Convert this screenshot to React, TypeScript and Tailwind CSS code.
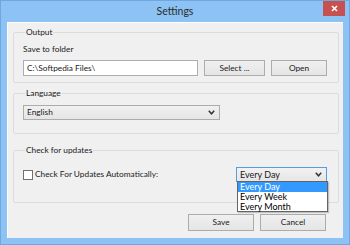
import React from 'react';

const font = { fontFamily: 'Lato, "Liberation Sans", sans-serif' };

function Chevron() {
  return (
    <svg width="7" height="5" viewBox="0 0 7 5" className="shrink-0">
      <polyline points="0.8,0.8 3.5,3.8 6.2,0.8" fill="none" stroke="#333" strokeWidth="1.5" />
    </svg>
  );
}

function Group({ label, className, children }: { label: string; className: string; children: React.ReactNode }) {
  return (
    <fieldset className={`ml-[5px] w-[326px] border border-[#dcdcdc] rounded-[2px] ${className}`}>
      <legend className="ml-[2px] px-[1px] text-[8.3px] leading-[12px] text-[#1a1a1a]">{label}</legend>
      {children}
    </fieldset>
  );
}

export default function App() {
  const options = ['Every Day', 'Every Week', 'Every Month'];

  return (
    <div className="relative w-[350px] h-[245px] bg-[#8cc3f4] border border-[#6ea8dd] flex flex-col" style={font}>
      {/* title bar */}
      <div className="h-[21px] flex items-center justify-center text-[10.5px] text-[#2b2b2b]">Settings</div>
      <div className="absolute top-0 right-[4px] w-[22px] h-[15px] bg-[#c75050] flex items-center justify-center">
        <svg width="7" height="7" viewBox="0 0 7 7">
          <path d="M1 1L6 6M6 1L1 6" stroke="#fff" strokeWidth="1.6" />
        </svg>
      </div>

      {/* client area */}
      <div className="mx-[6px] h-[216px] bg-[#f0f0f0] border-l border-t border-white text-[8.3px] text-[#1a1a1a] relative">
        <div className="h-[3px]" />
        <Group label="Output" className="pl-[9px] pr-[9px] pb-[6px]">
          <div className="pt-[5px] leading-[12px]">Save to folder</div>
          <div className="mt-[5px] flex items-center">
            <div className="w-[175px] h-[16px] bg-white border border-[#abadb3] flex items-center pl-[3px] leading-none">
              C:\Softpedia Files\
            </div>
            <button className="ml-[6px] w-[61px] h-[16px] border border-[#acacac] bg-gradient-to-b from-[#f0f0f0] to-[#e5e5e5] leading-none">
              Select ...
            </button>
            <button className="ml-[6px] w-[56px] h-[16px] border border-[#acacac] bg-gradient-to-b from-[#f0f0f0] to-[#e5e5e5] leading-none">
              Open
            </button>
          </div>
        </Group>

        <div className="h-[4px]" />
        <Group label="Language" className="pl-[9px] pb-[13px]">
          <div className="mt-[6px] w-[197px] h-[15px] border border-[#acacac] bg-gradient-to-b from-[#f0f0f0] to-[#e5e5e5] flex items-center justify-between pl-[3px] pr-[4px] leading-none">
            <span>English</span>
            <Chevron />
          </div>
        </Group>

        <div className="h-[10px]" />
        <Group label="Check for updates" className="pl-[9px] pb-[20px]">
          <div className="mt-[11px] flex items-center h-[15px]">
            <div className="w-[10px] h-[10px] bg-white border border-[#707070]" />
            <span className="ml-[2px] leading-none">Check For Updates Automatically:</span>
            <div className="ml-auto mr-[11px] w-[91px] h-[15px] border border-[#569de5] bg-gradient-to-b from-[#f2f2f2] to-[#e6e6e6] flex items-center justify-between pl-[3px] pr-[4px] leading-none">
              <span className="text-[9px]">Every Day</span>
              <Chevron />
            </div>
          </div>
        </Group>

        <div className="mt-[11px] flex justify-end gap-[6px] pr-[17px]">
          <button className="w-[66px] h-[17px] border border-[#acacac] bg-gradient-to-b from-[#f0f0f0] to-[#e5e5e5] leading-none">Save</button>
          <button className="w-[66px] h-[17px] border border-[#acacac] bg-gradient-to-b from-[#f0f0f0] to-[#e5e5e5] leading-none">Cancel</button>
        </div>

        {/* open dropdown list */}
        <div className="absolute left-[229px] top-[158px] w-[91px] bg-white border border-[#646464] flex flex-col text-[9px] shadow-[1px_1px_1px_rgba(0,0,0,0.2)]">
          {options.map((o, i) => (
            <div
              key={o}
              className={`h-[9.7px] flex items-center pl-[2px] leading-none ${i === 0 ? 'bg-[#3399ff] text-white' : 'text-black'}`}
            >
              {o}
            </div>
          ))}
        </div>
      </div>
    </div>
  );
}
